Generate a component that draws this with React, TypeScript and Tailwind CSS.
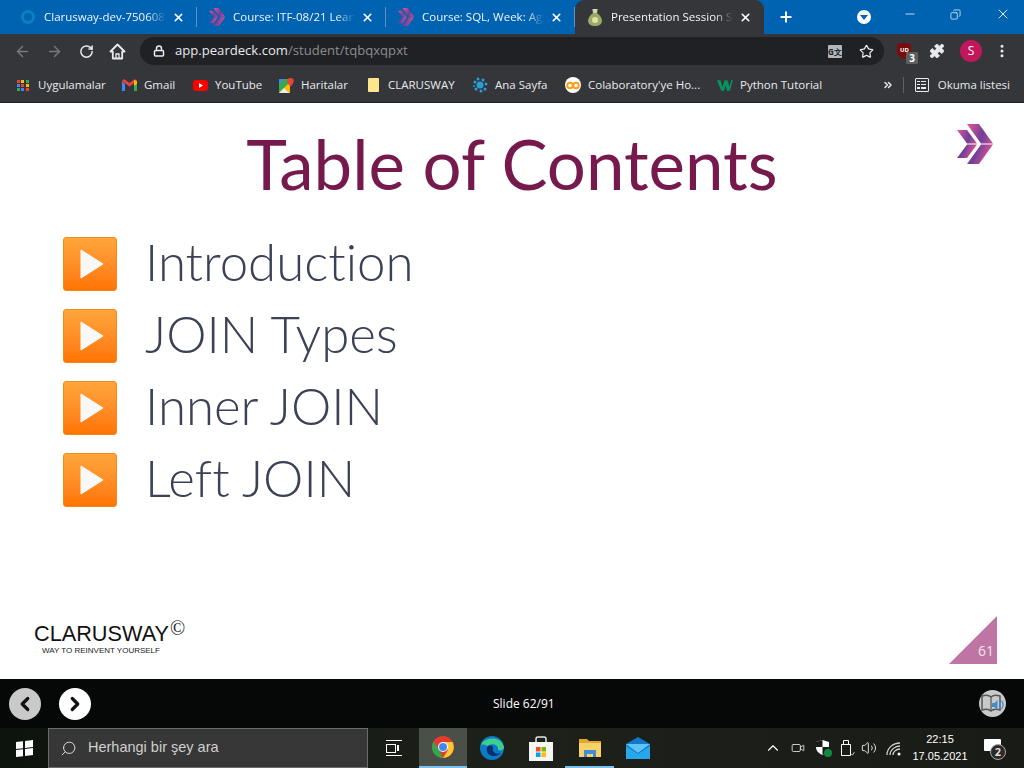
import React from 'react';
import { ArrowLeft, ArrowRight, RotateCw, Lock, Star, Puzzle, MoreVertical, Plus, X, Minus, Copy, ChevronUp, ChevronLeft, ChevronRight, ChevronsRight, Search, Volume2, Video } from 'lucide-react';

const UI_FONT = "font-['Open_Sans','Noto_Sans',sans-serif]";

function ClaruswayChevron({ w = 16, h = 18, id }: { w?: number; h?: number; id: string }) {
  return (
    <svg width={w} height={h} viewBox="0 0 36 40">
      <defs>
        <linearGradient id={id} x1="0" y1="0" x2="1" y2="0.6">
          <stop offset="0" stopColor="#e8559a" />
          <stop offset="0.55" stopColor="#6f3f98" />
          <stop offset="1" stopColor="#de5296" />
        </linearGradient>
      </defs>
      <path d="M0 6h10l10 13.500H10z M10 20.500h10L10 34H0z" fill={`url(#${id})`} />
      <path d="M10 0h12l14 19.500H24z M24 20.500h12L22 40H10z" fill={`url(#${id})`} />
    </svg>
  );
}

function OceanIcon() {
  return <span className="block w-[14px] h-[14px] rounded-full border-[3px] border-[#0a7fc4]" />;
}

function PearIcon() {
  return (
    <svg width="14" height="18" viewBox="0 0 14 18">
      <path d="M4 1h6L9 5c3 2 5 5 5 8 0 3-3 5-7 5s-7-2-7-5c0-3 2-6 5-8z" fill="#9aa86a" />
      <path d="M5 1h4L8.500 5h-3z" fill="#d8d8c8" />
      <circle cx="7" cy="12" r="3" fill="#dfe49a" />
    </svg>
  );
}

function Tab({ icon, title, active }: { icon: React.ReactNode; title: string; active?: boolean }) {
  return (
    <div className={`relative flex items-center w-[189px] h-[34px] pl-[12px] pr-[10px] shrink-0 ${active ? 'bg-[#35363a] rounded-t-[9px]' : ''}`}>
      <span className="w-[16px] flex justify-center shrink-0">{icon}</span>
      <span className="ml-[8px] w-[122px] overflow-hidden whitespace-nowrap text-[11.5px] text-[#f1f3f4] [mask-image:linear-gradient(to_right,black_85%,transparent)]">
        {title}
      </span>
      <X size={13} strokeWidth={3} className="ml-[6px] text-white shrink-0" />
      {!active && <span className="absolute right-0 top-[7px] w-px h-[20px] bg-[#5c93c6]" />}
    </div>
  );
}

function Bookmark({ icon, label, width }: { icon: React.ReactNode; label: string; width: string }) {
  return (
    <div className={`flex items-center shrink-0 ${width}`}>
      <span className="w-[16px] h-[16px] flex items-center justify-center shrink-0">{icon}</span>
      <span className="ml-[7px] text-[11.5px] text-[#e8eaed] whitespace-nowrap">{label}</span>
    </div>
  );
}

function AppsIcon() {
  const colors = ['#ea4335', '#fbbc04', '#34a853', '#4285f4', '#ea4335', '#fbbc04', '#34a853', '#4285f4', '#ea4335'];
  return (
    <span className="grid grid-cols-3 gap-[1px] w-[13px]">
      {colors.map((c, i) => (
        <span key={i} className="w-[3px] h-[3px]" style={{ background: c }} />
      ))}
    </span>
  );
}

function GmailIcon() {
  return (
    <svg width="15" height="12" viewBox="0 0 15 12">
      <path d="M0 2v10h3V5z" fill="#4285f4" />
      <path d="M15 2v10h-3V5z" fill="#34a853" />
      <path d="M0 2l7.500 5.500L15 2 13 0 7.500 4 2 0z" fill="#ea4335" />
      <path d="M12 1l3 1v3l-3 2z" fill="#fbbc04" />
    </svg>
  );
}

function YoutubeIcon() {
  return (
    <svg width="15" height="11" viewBox="0 0 15 11">
      <rect width="15" height="11" rx="3" fill="#f00" />
      <path d="M6 3l4 2.500L6 8z" fill="#fff" />
    </svg>
  );
}

function MapsIcon() {
  return (
    <svg width="15" height="15" viewBox="0 0 15 15">
      <path d="M0 1h11v14H0z" fill="#34a853" />
      <path d="M0 15L11 4v11z" fill="#fbbc04" />
      <path d="M0 15l5-5 5 5z" fill="#e8eaed" />
      <path d="M0 1h5L0 6z" fill="#4285f4" />
      <path d="M11.500 0a3.300 3.300 0 0 1 3.300 3.300c0 2.200-3.300 5.200-3.300 5.200S8.200 5.500 8.200 3.300A3.300 3.300 0 0 1 11.500 0z" fill="#ea4335" />
    </svg>
  );
}

function SplashIcon() {
  return (
    <svg width="16" height="16" viewBox="0 0 16 16" fill="#2a9fd6">
      <circle cx="8" cy="8" r="3.500" />
      <circle cx="3" cy="5" r="1.500" />
      <circle cx="6" cy="2" r="1.500" />
      <circle cx="11" cy="3" r="1.500" />
      <circle cx="14" cy="7" r="1.500" />
      <circle cx="13" cy="12" r="1.500" />
      <circle cx="9" cy="14" r="1.500" />
      <circle cx="4" cy="12" r="1.500" />
      <circle cx="2" cy="9" r="1" />
    </svg>
  );
}

function ColabIcon() {
  return (
    <span className="w-[16px] h-[16px] rounded-full bg-white flex items-center justify-center">
      <svg width="14" height="9" viewBox="0 0 14 9" fill="none" stroke="#f9a01b" strokeWidth="2">
        <circle cx="4" cy="4.500" r="2.800" />
        <circle cx="10" cy="4.500" r="2.800" />
      </svg>
    </span>
  );
}

function W3Icon() {
  return (
    <svg width="17" height="12" viewBox="0 0 17 12">
      <path d="M0 1h3.500L6 8l2-7h3L7.500 12H4.500z M8 1h3l2.500 7L15 1h2l-3.500 11h-3z" fill="#04965f" />
    </svg>
  );
}

function HomeOutline() {
  return (
    <svg width="17" height="17" viewBox="0 0 17 17" fill="none" stroke="#e8eaed" strokeWidth="1.800" className="ml-[15px]">
      <path d="M8.500 1.500L1.500 8.500h2.300V15.500h9.400V8.500h2.300z" strokeLinejoin="round" />
      <path d="M7 15.500v-4.500h3v4.500" strokeWidth="1.300" />
    </svg>
  );
}

function ChromeIcon() {
  return (
    <svg width="22" height="22" viewBox="0 0 22 22">
      <circle cx="11" cy="11" r="11" fill="#e33b2e" />
      <path d="M11 22A11 11 0 0 1 1.500 5.500L7 14z" fill="#2da94f" />
      <path d="M11 6h9.600A11 11 0 0 1 11 22l5-8z" fill="#fcc934" />
      <circle cx="11" cy="11" r="5" fill="#fff" />
      <circle cx="11" cy="11" r="4" fill="#4285f4" />
    </svg>
  );
}

function EdgeIcon() {
  return (
    <svg width="24" height="24" viewBox="0 0 24 24">
      <circle cx="12" cy="12" r="12" fill="#0c7bc4" />
      <path d="M1 9C3 2 20-2 24 11c0 3-3 4-6 3 1-5-6-8-10-4C5 9 3 8 1 9z" fill="#3ccf91" />
      <path d="M8 10c-3 3-1 10 6 10 3 0 5-1 7-3-5 2-9-1-8-5 0-2-2-4-5-2z" fill="#0a2f6e" />
    </svg>
  );
}

function StoreIcon() {
  return (
    <svg width="24" height="25" viewBox="0 0 24 25">
      <path d="M7 6V3a2 2 0 0 1 2-2h6a2 2 0 0 1 2 2v3" fill="none" stroke="#e6e6e6" strokeWidth="1.500" />
      <rect y="6" width="24" height="19" fill="#f5f5f5" />
      <rect x="7" y="11" width="4.500" height="4.500" fill="#f25022" />
      <rect x="12.500" y="11" width="4.500" height="4.500" fill="#7fba00" />
      <rect x="7" y="16.500" width="4.500" height="4.500" fill="#00a4ef" />
      <rect x="12.500" y="16.500" width="4.500" height="4.500" fill="#ffb900" />
    </svg>
  );
}

function FolderIcon() {
  return (
    <svg width="22" height="19" viewBox="0 0 22 19">
      <path d="M0 1h8l2 2h12v16H0z" fill="#e2a82e" />
      <path d="M0 5h22v14H0z" fill="#f8d268" />
      <path d="M5 12h12v7h-3v-3H8v3H5z" fill="#3e8fd6" />
    </svg>
  );
}

function MailIcon() {
  return (
    <svg width="24" height="22" viewBox="0 0 24 22">
      <path d="M0 7l12-7 12 7v15H0z" fill="#0f78c9" />
      <path d="M0 7h24l-12 9z" fill="#5ec4f5" />
      <path d="M0 22V9l12 8 12-8v13z" fill="#28a8ea" />
    </svg>
  );
}

function ShieldIcon() {
  return (
    <span className="relative block w-[15px] h-[16px] ml-[11px]">
      <svg width="13" height="15" viewBox="0 0 13 15">
        <path d="M6.500 0l6.500 2v5c0 4-3 6.500-6.500 8C3 13.500 0 11 0 7V2z" fill="#fff" />
        <path d="M6.500 0v7H0V2zM6.500 7H13c0 4-3 6.500-6.500 8z" fill="#1a1a1a" />
      </svg>
      <span className="absolute right-[-1px] bottom-[-1px] w-[8px] h-[8px] rounded-full bg-[#108a42]" />
    </span>
  );
}

function UsbStick() {
  return (
    <svg width="15" height="16" viewBox="0 0 15 16" fill="none" stroke="#fff" strokeWidth="1" className="ml-[9px]">
      <path d="M3.500 0.500h5v4h-5z" />
      <path d="M1.500 4.500h9v11h-9z" />
      <path d="M11 14l1.500 1 2-3" stroke="#bbb" />
    </svg>
  );
}

function SignalFan() {
  return (
    <svg width="16" height="15" viewBox="0 0 16 15" fill="none" stroke="#d0d0d0" strokeWidth="1.300" className="ml-[9px]">
      <path d="M1 14C1 7 7 2 14 2" />
      <path d="M4 14c0-5 5-9 10-9" />
      <path d="M7 14c0-3 3-6 7-6" />
      <circle cx="13" cy="13" r="1.500" fill="#fff" stroke="none" />
    </svg>
  );
}

function BookAudioIcon() {
  return (
    <svg width="23" height="21" viewBox="0 0 23 21" fill="none">
      <path d="M1 3c3-1 7-1 9 1 2-2 6-2 9-1v14c-3-1-7-1-9 1-2-2-6-2-9-1z" stroke="#55575a" strokeWidth="1.500" />
      <path d="M10 4v14" stroke="#55575a" strokeWidth="1.200" />
      <path d="M11 10h2.500l3-3v10l-3-3H11z" fill="#3f8fd0" />
      <path d="M18.500 9c1 1.500 1 4 0 5.500M20.500 7.500c1.800 2.500 1.800 6 0 8.500" stroke="#3f8fd0" strokeWidth="1.200" />
    </svg>
  );
}

function OrangeBullet() {
  return (
    <span className="w-[54px] h-[54px] shrink-0 rounded-[3px] border border-[#f08a1a] bg-gradient-to-b from-[#ffa63c] to-[#ff7400] flex items-center justify-center">
      <svg width="24" height="30" viewBox="0 0 24 30" className="ml-[4px]">
        <path d="M1 1l22 14L1 29z" fill="#f8f8f8" stroke="#f8f8f8" strokeLinejoin="round" />
      </svg>
    </span>
  );
}

const contents = ['Introduction', 'JOIN Types', 'Inner JOIN', 'Left JOIN'];

export default function App() {
  return (
    <div className={`w-[1024px] h-[768px] overflow-hidden flex flex-col bg-white ${UI_FONT}`}>
      {/* tab strip */}
      <div className="h-[34px] bg-[#0063b1] flex items-center shrink-0 pl-[8px]">
        <Tab icon={<OceanIcon />} title="Clarusway-dev-750608 - Ocean" />
        <Tab icon={<ClaruswayChevron id="tab-a" />} title="Course: ITF-08/21 Learning" />
        <Tab icon={<ClaruswayChevron id="tab-b" />} title="Course: SQL, Week: Aggregate" />
        <Tab active icon={<PearIcon />} title="Presentation Session Student" />
        <Plus size={16} strokeWidth={3} className="ml-[14px] text-white" />
        <span className="ml-[63px] w-[14px] h-[14px] rounded-full bg-white flex items-center justify-center">
          <span className="border-x-[4px] border-x-transparent border-t-[5px] border-t-[#0063b1] mt-[1px]" />
        </span>
        <Minus size={14} strokeWidth={1.3} className="ml-[32px] mb-[6px] text-white" />
        <Copy size={11} strokeWidth={1.5} className="ml-[33px] mb-[6px] text-white -scale-x-100" />
        <X size={16} strokeWidth={1.3} className="ml-[34px] mb-[6px] text-white" />
      </div>

      {/* address bar */}
      <div className="h-[34px] bg-[#35363a] flex items-center shrink-0 pl-[14px] pr-[8px]">
        <ArrowLeft size={17} strokeWidth={2} className="text-[#77797c]" />
        <ArrowRight size={17} strokeWidth={2} className="ml-[15px] text-[#77797c]" />
        <RotateCw size={15} strokeWidth={2.4} className="ml-[16px] text-[#e8eaed]" />
        <HomeOutline />
        <div className="ml-[14px] w-[744px] h-[28px] rounded-full bg-[#202124] flex items-center pl-[13px] pr-[10px]">
          <Lock size={12} strokeWidth={3} className="text-[#e8eaed]" />
          <span className="ml-[10px] text-[13.1px] text-[#e8eaed] leading-none">
            app.peardeck.com<span className="text-[#8b8d90]">/student/tqbqxqpxt</span>
          </span>
          <span className="ml-auto w-[14px] h-[13px] bg-[#b4b6b8] rounded-[1px] text-[8px] leading-[13px] text-center text-[#202124] font-bold">G文</span>
          <Star size={15} strokeWidth={2} className="ml-[17px] text-[#e8eaed]" />
        </div>
        <span className="relative ml-[13px] w-[14px] h-[16px] block">
          <svg width="14" height="16" viewBox="0 0 14 16">
            <path d="M0 1l7-1 7 1v8c0 3-3 5-7 7-4-2-7-4-7-7z" fill="#7a0c0c" />
          </svg>
          <span className="absolute left-[3px] top-[3px] text-[6px] leading-[8px] font-bold text-white">UD</span>
          <span className="absolute left-[9px] top-[9px] w-[12px] h-[12px] bg-[#5c5e60] rounded-[1px] text-[10px] leading-[12px] text-center text-white font-bold">3</span>
        </span>
        <Puzzle size={16} fill="#e8eaed" strokeWidth={1} className="ml-[18px] text-[#e8eaed]" />
        <span className="ml-[15px] w-[22px] h-[22px] rounded-full bg-[#c2185b] text-white text-[12px] flex items-center justify-center">S</span>
        <MoreVertical size={16} strokeWidth={2.5} className="ml-[12px] text-[#e8eaed]" />
      </div>

      {/* bookmarks */}
      <div className="h-[35px] bg-[#35363a] border-b border-[#202124] flex items-center shrink-0 pl-[15px] pr-[14px]">
        <Bookmark width="w-[106px]" icon={<AppsIcon />} label="Uygulamalar" />
        <Bookmark width="w-[71px]" icon={<GmailIcon />} label="Gmail" />
        <Bookmark width="w-[86px]" icon={<YoutubeIcon />} label="YouTube" />
        <Bookmark width="w-[87px]" icon={<MapsIcon />} label="Haritalar" />
        <Bookmark width="w-[107px]" icon={<span className="w-[11px] h-[14px] bg-[#fce58d] rounded-[1px]" />} label="CLARUSWAY" />
        <Bookmark width="w-[93px]" icon={<SplashIcon />} label="Ana Sayfa" />
        <Bookmark width="w-[152px]" icon={<ColabIcon />} label="Colaboratory'ye Ho..." />
        <Bookmark width="w-[120px]" icon={<W3Icon />} label="Python Tutorial" />
        <ChevronsRight size={12} strokeWidth={3} className="ml-auto text-[#e8eaed]" />
        <span className="ml-[9px] w-px h-[16px] bg-[#5f6165]" />
        <span className="ml-[11px] w-[14px] h-[14px] border-[1.5px] border-[#e8eaed] rounded-[1px] grid grid-cols-[3px_1fr] gap-[1px] p-[1.5px]">
          {[0, 1, 2, 3, 4, 5].map((i) => (
            <span key={i} className="h-[1.5px] bg-[#e8eaed]" />
          ))}
        </span>
        <span className="ml-[9px] text-[11.5px] text-[#e8eaed] whitespace-nowrap">Okuma listesi</span>
      </div>

      {/* slide */}
      <div className="relative flex-1 flex flex-col bg-white">
        <h1 className="mt-[23px] text-center text-[#761a4e] text-[69px] leading-[76px] font-normal [font-variant-ligatures:none] font-['Lato','Open_Sans',sans-serif]">
          Table of Contents
        </h1>
        <span className="absolute right-[31px] top-[21px]">
          <ClaruswayChevron id="slide-logo" w={36} h={40} />
        </span>
        <ul className="mt-[35px] pl-[63px] flex flex-col gap-[18px]">
          {contents.map((item) => (
            <li key={item} className="flex items-center">
              <OrangeBullet />
              <span className="ml-[28px] mb-[4px] text-[51px] leading-[50px] font-light [font-variant-ligatures:none] text-[#3b4156] font-['Lato','Open_Sans',sans-serif]">
                {item}
              </span>
            </li>
          ))}
        </ul>
        <div className="mt-auto flex items-end justify-between pl-[34px] pr-[27px] pb-[15px]">
          <div className="mb-[8px]">
            <div className="flex items-start leading-none">
              <span className="text-[21.700px] leading-[23px] mt-[1px] text-[#111] font-['Liberation_Sans',sans-serif]">CLARUSWAY</span>
              <span className="ml-[1px] -mt-[3px] text-[20px] leading-[20px] text-[#222] font-['Liberation_Serif',serif]">©</span>
            </div>
            <div className="mt-[1px] ml-[8px] text-[8px] leading-[10px] text-[#222] font-['Liberation_Sans',sans-serif]">WAY TO REINVENT YOURSELF</div>
          </div>
          <div className="w-[48px] h-[48px] bg-[#bd75a3] [clip-path:polygon(100%_0,100%_100%,0_100%)] flex items-end justify-end pr-[3px] pb-[6px] text-[14px] leading-none text-[#f3e3ee]">
            61
          </div>
        </div>
      </div>

      {/* peardeck student bar */}
      <div className="h-[49px] bg-[#060808] flex items-center shrink-0 pl-[9px] pr-[18px]">
        <span className="w-[32px] h-[32px] rounded-full bg-[#c9c9c9] flex items-center justify-center">
          <ChevronLeft size={22} strokeWidth={3.5} className="text-[#111]" />
        </span>
        <span className="ml-[18px] w-[32px] h-[32px] rounded-full bg-white flex items-center justify-center">
          <ChevronRight size={22} strokeWidth={3.5} className="text-[#111]" />
        </span>
        <span className="ml-[402px] text-[12px] text-white font-medium">Slide 62/91</span>
        <span className="ml-auto w-[27px] h-[27px] rounded-full bg-[#c9c9c9] flex items-center justify-center">
          <BookAudioIcon />
        </span>
      </div>

      {/* windows taskbar */}
      <div className="h-[40px] bg-gradient-to-r from-[#0d130d] via-[#1d211a] to-[#191c16] flex items-center shrink-0 text-white">
        <span className="w-[48px] flex justify-center">
          <span className="grid grid-cols-2 gap-[1px] -skew-y-6">
            <span className="w-[7px] h-[7px] bg-white" />
            <span className="w-[8px] h-[7px] bg-white" />
            <span className="w-[7px] h-[7px] bg-white" />
            <span className="w-[8px] h-[7px] bg-white" />
          </span>
        </span>
        <div className="w-[320px] h-[40px] bg-[#373737] border border-[#6b6b6b] flex items-center pl-[11px]">
          <Search size={17} strokeWidth={1.3} className="text-[#e6e6e6] -scale-x-100" />
          <span className="ml-[11px] text-[14.500px] text-[#cfcfcf] font-['Liberation_Sans',sans-serif]">Herhangi bir şey ara</span>
        </div>
        <span className="w-[51px] flex justify-center">
          <span className="w-[16px] h-[16px] border-y border-white flex items-center gap-[1px]">
            <span className="w-[10px] h-[9px] border border-white" />
            <span className="w-[2px] h-[6px] bg-white" />
          </span>
        </span>
        <span className="w-[48px] h-[40px] bg-[#4a4f47] border-b-2 border-[#7cc0f0] flex items-center justify-center">
          <ChromeIcon />
        </span>
        <span className="w-[49px] flex justify-center"><EdgeIcon /></span>
        <span className="w-[49px] flex justify-center"><StoreIcon /></span>
        <span className="w-[49px] h-[40px] border-b-2 border-[#7cc0f0] flex items-center justify-center"><FolderIcon /></span>
        <span className="w-[48px] flex justify-center"><MailIcon /></span>
        <ChevronUp size={18} strokeWidth={1.5} className="ml-[102px]" />
        <Video size={14} strokeWidth={1.3} className="ml-[9px]" />
        <ShieldIcon />
        <UsbStick />
        <Volume2 size={16} strokeWidth={1.3} className="ml-[6px]" />
        <SignalFan />
        <div className="ml-[10px] w-[56px] flex flex-col items-center text-[11px] leading-[17px] font-['Liberation_Sans',sans-serif]">
          <span>22:15</span>
          <span>17.05.2021</span>
        </div>
        <span className="relative ml-[16px] w-[17px] h-[12px] bg-white rounded-[1px] mb-[6px]">
          <span className="absolute left-[6px] top-[5px] w-[16px] h-[16px] rounded-full bg-[#2a2a2a] border border-[#aaa] text-[11px] leading-[14px] text-center font-bold text-[#ddd]">2</span>
        </span>
      </div>
    </div>
  );
}
